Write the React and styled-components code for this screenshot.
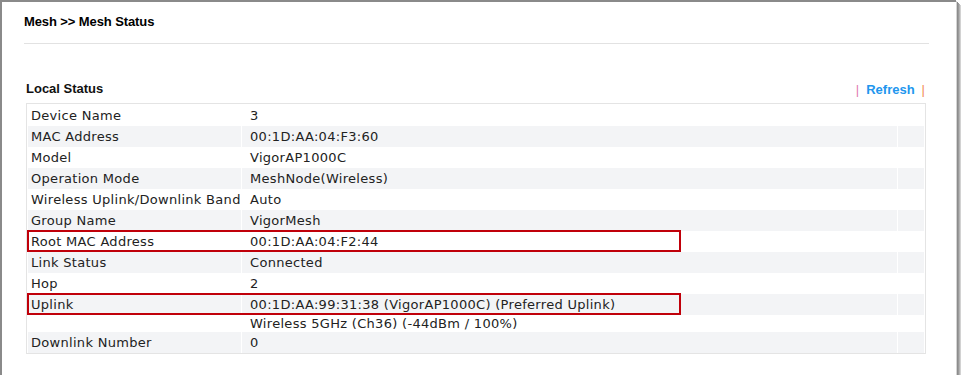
import React from 'react'
import styled, { createGlobalStyle } from 'styled-components'

const GlobalStyle = createGlobalStyle`
  html, body {
    margin: 0;
    padding: 0;
    background: #ffffff;
  }
`

const Frame = styled.div`
  box-sizing: border-box;
  width: 956px;
  height: 375px;
  background: #ffffff;
  border-top: 2px solid #8a8a8a;
  border-left: 2px solid #8a8a8a;
  box-shadow: 1px 1px 0 #d4d4d4, 2px 2px 0 #8c8c8c, 3px 3px 0 #9a9a9a,
    4px 4px 0 #b4b4b4, 5px 5px 0 #d2d2d2;
  padding: 0 27px 0 22px;
`

const PageTitle = styled.div`
  padding-top: 12px;
  font-family: 'Liberation Sans', Arial, sans-serif;
  font-weight: bold;
  font-size: 13px;
  line-height: 16px;
  letter-spacing: -0.1px;
  color: #000;
`

const Rule = styled.div`
  height: 1px;
  margin-top: 13px;
  background: #e2e2e2;
`

const Section = styled.section`
  width: 900px;
  margin: 36px 0 0 2px;
`

const SectionHeader = styled.div`
  display: flex;
  justify-content: space-between;
  align-items: flex-start;
  height: 18px;
  margin-bottom: 5px;
`

const SectionTitle = styled.div`
  padding-top: 1px;
  font-family: 'Liberation Sans', Arial, sans-serif;
  font-weight: bold;
  font-size: 13px;
  line-height: 16px;
  color: #111;
`

const Actions = styled.div`
  display: flex;
  align-items: center;
  margin-top: 2px;
  margin-right: 1px;
  font-family: 'Liberation Sans', Arial, sans-serif;
  font-size: 13px;
  line-height: 16px;
`

const Pipe = styled.span`
  color: ${(p) => p.$color};
  padding: 0 ${(p) => p.$gap}px 0 0;
  &:last-child {
    padding: 0 0 0 ${(p) => p.$gap}px;
  }
`

const RefreshLink = styled.a`
  color: #2196ee;
  font-weight: bold;
  text-decoration: none;
  cursor: pointer;
`

const Table = styled.div`
  display: grid;
  row-gap: 1px;
  padding: 1px;
  border: 1px solid #e4e4e4;
  font-family: 'DejaVu Sans', Verdana, sans-serif;
  font-size: 13px;
  letter-spacing: 0.3px;
  color: #222;
`

const Row = styled.div`
  position: relative;
  display: grid;
  grid-template-columns: 213px 655px 26px;
  column-gap: 1px;
  height: ${(p) => (p.$compact ? 16 : 20)}px;
  line-height: ${(p) => (p.$compact ? 16 : 20)}px;

  & > div {
    background: ${(p) => (p.$shaded ? '#f3f4f6' : '#ffffff')};
  }

  ${(p) =>
    p.$marked &&
    `
    &::after {
      content: '';
      position: absolute;
      left: -1px;
      top: -1px;
      width: 654px;
      height: 22px;
      box-sizing: border-box;
      border: 2px solid #c0000a;
      pointer-events: none;
    }
  `}
`

const Label = styled.div`
  box-sizing: border-box;
  padding: 1px 0 0 3px;
  white-space: nowrap;
`

const Value = styled.div`
  box-sizing: border-box;
  padding: 1px 0 0 8px;
  white-space: nowrap;
`

const Spacer = styled.div``

const rows = [
  { label: 'Device Name', value: '3' },
  { label: 'MAC Address', value: '00:1D:AA:04:F3:60' },
  { label: 'Model', value: 'VigorAP1000C' },
  { label: 'Operation Mode', value: 'MeshNode(Wireless)' },
  { label: 'Wireless Uplink/Downlink Band', value: 'Auto' },
  { label: 'Group Name', value: 'VigorMesh' },
  { label: 'Root MAC Address', value: '00:1D:AA:04:F2:44', marked: true },
  { label: 'Link Status', value: 'Connected' },
  { label: 'Hop', value: '2' },
  {
    label: 'Uplink',
    value: '00:1D:AA:99:31:38 (VigorAP1000C) (Preferred Uplink)',
    marked: true,
  },
  { label: '', value: 'Wireless 5GHz (Ch36) (-44dBm / 100%)', compact: true },
  { label: 'Downlink Number', value: '0' },
]

const App = () => {
  return (
    <>
      <GlobalStyle />
      <Frame>
        <PageTitle>Mesh &gt;&gt; Mesh Status</PageTitle>
        <Rule />
        <Section>
          <SectionHeader>
            <SectionTitle>Local Status</SectionTitle>
            <Actions>
              <Pipe $color="#e07ab0" $gap={7}>|</Pipe>
              <RefreshLink>Refresh</RefreshLink>
              <Pipe $color="#f28a55" $gap={7}>|</Pipe>
            </Actions>
          </SectionHeader>
          <Table>
            {rows.map((row, i) => (
              <Row
                key={i}
                $shaded={i % 2 === 1}
                $marked={row.marked}
                $compact={row.compact}
              >
                <Label>{row.label}</Label>
                <Value>{row.value}</Value>
                <Spacer />
              </Row>
            ))}
          </Table>
        </Section>
      </Frame>
    </>
  )
}

export default App
